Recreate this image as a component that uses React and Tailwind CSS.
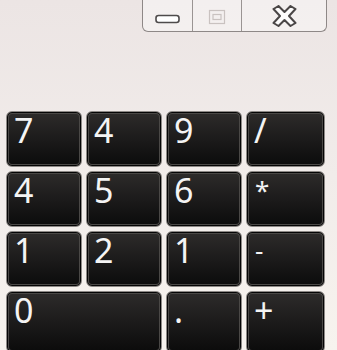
const keys = [
  { label: "7" },
  { label: "4" },
  { label: "9" },
  { label: "/" },
  { label: "4" },
  { label: "5" },
  { label: "6" },
  { label: "*", small: true },
  { label: "1" },
  { label: "2" },
  { label: "1" },
  { label: "-", small: true },
  { label: "0", wide: true },
  { label: "." },
  { label: "+" },
];

function Key({ label, wide, small }) {
  return (
    <button
      className={`${wide ? "col-span-2" : ""} ${small ? "text-[26px] pt-[5px] pl-[8px]" : "text-[34px] pt-[1px] pl-[7px]"} relative rounded-[6px] border border-[#8d8986] bg-gradient-to-b from-[#2e2c2b] via-[#1c1b1b] to-[#0b0b0b] shadow-[inset_0_0_0_1px_#050505,inset_0_0_0_2px_#4a4846] text-left text-[#f4f4f4] leading-none flex items-start`}
      style={{ fontFamily: '"Noto Sans", "Open Sans", sans-serif' }}
    >
      {label}
    </button>
  );
}

function TitleButtons() {
  return (
    <div className="flex justify-end pr-[10px]">
      <div className="flex h-[32px] border border-t-0 border-[#8e8887] rounded-b-[6px] bg-white/40">
        <div className="w-[50px] flex items-center justify-center pt-[6px] border-r border-[#9a9493]">
          <svg width="25" height="10" viewBox="0 0 25 10">
            <rect x="1" y="1.5" width="23" height="7" rx="2.5" fill="#ffffff" stroke="#4e4b4b" strokeWidth="1.6" />
          </svg>
        </div>
        <div className="w-[49px] flex items-center justify-center pt-[2px] border-r border-[#9a9493]">
          <svg width="18" height="16" viewBox="0 0 18 16">
            <rect x="1.5" y="1.5" width="15" height="13" fill="none" stroke="#c9c2c0" strokeWidth="1.2" />
            <rect x="5" y="5.5" width="8" height="5" fill="none" stroke="#c9c2c0" strokeWidth="1.2" />
          </svg>
        </div>
        <div className="w-[84px] flex items-center justify-center pt-[1px]">
          <svg width="25" height="22" viewBox="0 0 25 22">
            <path
              d="M1.5 4 L6.5 1 L12.5 7 L18.5 1 L23.5 4 L17 11 L23.5 18 L18.5 21 L12.5 15 L6.5 21 L1.5 18 L8 11 Z"
              fill="#fdfcfc"
              stroke="#4a4646"
              strokeWidth="2"
              strokeLinejoin="round"
            />
          </svg>
        </div>
      </div>
    </div>
  );
}

export default function App() {
  return (
    <div className="w-[337px] h-[350px] overflow-hidden bg-gradient-to-b from-[#ece5e4] via-[#f1ecea] to-[#f7f3ee]">
      <TitleButtons />
      <div className="mt-[79px] pl-[6px] grid grid-cols-[76px_76px_76px_79px] grid-rows-[56px_56px_56px_62px] gap-[4px]">
        {keys.map((k, i) => (
          <Key key={`key_${i}`} label={k.label} wide={k.wide} small={k.small} />
        ))}
      </div>
    </div>
  );
}
